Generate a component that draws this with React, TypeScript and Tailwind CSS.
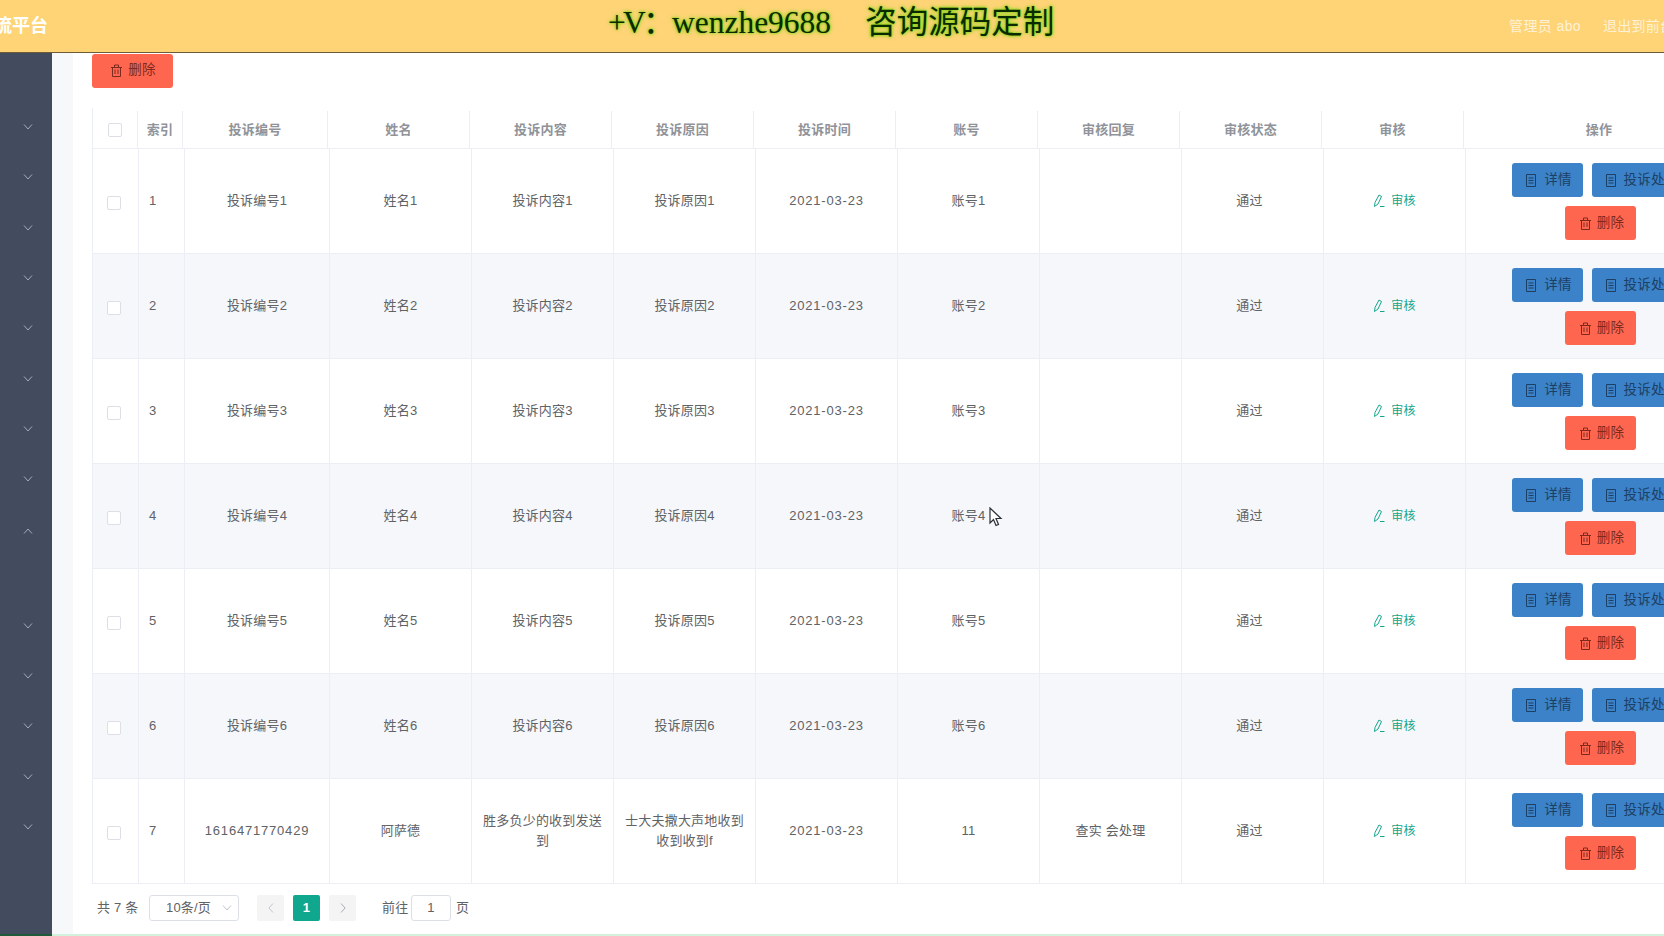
import type { ReactNode } from 'react';

interface Row {
  id: number;
  code: string;
  name: string;
  content: string;
  reason: string;
  account: string;
  reply: string;
}

const rows: Row[] = [1, 2, 3, 4, 5, 6].map((n) => ({
  id: n,
  code: `投诉编号${n}`,
  name: `姓名${n}`,
  content: `投诉内容${n}`,
  reason: `投诉原因${n}`,
  account: `账号${n}`,
  reply: '',
}));

rows.push({
  id: 7,
  code: '1616471770429',
  name: '阿萨德',
  content: '胜多负少的收到发送到',
  reason: '士大夫撒大声地收到收到收到f',
  account: '11',
  reply: '查实 会处理',
});

const headers = ['投诉编号', '姓名', '投诉内容', '投诉原因', '投诉时间', '账号', '审核回复', '审核状态', '审核', '操作'];

// sidebar menu, index 8 is open (empty submenu below it)
const menuCount = 14;
const openIndex = 8;

function TrashIcon() {
  return (
    <svg width="11" height="13" viewBox="0 0 11 13" fill="none" stroke="currentColor" strokeWidth="1" className="shrink-0">
      <path d="M0 3.500h11M3.500 3.500v-2.500h4v2.500M1.500 3.500v9h8v-9M4 5.500v4.500M7 5.500v4.500" />
    </svg>
  );
}

function DocIcon() {
  return (
    <svg width="10" height="13" viewBox="0 0 10 13" fill="none" stroke="currentColor" strokeWidth="1" className="shrink-0">
      <path d="M.5.500h9v12h-9zM2.500 4h5M2.500 6.500h5M2.500 9h5" />
    </svg>
  );
}

function PencilIcon() {
  return (
    <svg width="12" height="13" viewBox="0 0 12 13" fill="none" stroke="currentColor" strokeWidth="1" className="shrink-0 mb-[2px]">
      <path d="M1.500 12.500 2 8.500 6 1l2.500 1.500L5 10zM7 12.500h4.500" />
    </svg>
  );
}

function Chevron({ up, color = '#a3abb9' }: { up?: boolean; color?: string }) {
  return (
    <svg width="10" height="6" viewBox="0 0 10 6" fill="none" stroke={color} strokeWidth="1">
      <path d={up ? 'M1 5.500 5 1l4 4.500' : 'M1 .5 5 5l4-4.500'} />
    </svg>
  );
}

function Check() {
  return <span className="block w-[14px] h-[14px] rounded-[2px] border border-[#dcdfe6] bg-white" />;
}

function ActionButton({ color, icon, children, width }: { color: 'blue' | 'red'; icon: ReactNode; children: ReactNode; width: string }) {
  const palette = color === 'blue' ? 'bg-[#3b82c8] text-[#1d3f63] gap-[8px] pl-[3px]' : 'bg-[#ff6650] text-[#7d2a1e] gap-[6px] pl-[3px]';
  return (
    <button className={`h-[34px] shrink-0 rounded-[3px] flex items-center justify-center pt-px text-[13.500px] whitespace-nowrap ${palette} ${width}`}>
      {icon}
      {children}
    </button>
  );
}

function Cell({ children, className = '' }: { children?: ReactNode; className?: string }) {
  return (
    <div className={`border-r border-[#ebeef5] flex items-center justify-center text-center ${className}`}>
      {children}
    </div>
  );
}

export default function App() {
  return (
    <div className="w-[1664px] h-[936px] overflow-hidden flex flex-col bg-white text-[13px] tracking-[0.2px] text-[#606266] font-['Liberation_Sans','Noto_Sans_CJK_SC',sans-serif]">
      {/* top bar */}
      <header className="h-[53px] shrink-0 bg-[#fed476] border-b border-[#6b5b38] flex items-center overflow-hidden text-white">
        <div className="shrink-0 -ml-[6px] w-[54px] text-[18px] font-bold tracking-normal">流平台</div>
        <div className="shrink-0 ml-[560px] w-[452px] flex whitespace-pre -mt-[7px] text-[31.500px] tracking-normal text-[#0c2a00] font-['Liberation_Serif','Noto_Sans_CJK_SC',serif] [text-shadow:0_0_2px_#6fd400,0_0_4px_#6fd400]">
          <span className="tracking-[-2.700px]">+V：</span>
          <span>wenzhe9688</span>
          <span className="ml-[34px]">咨询源码定制</span>
        </div>
        <div className="shrink-0 ml-[449px] text-[14px] tracking-[0.4px] opacity-70">管理员 abo</div>
        <div className="shrink-0 ml-[22px] text-[14px] opacity-70">退出到前台</div>
      </header>

      <div className="flex-1 flex min-h-0">
        {/* sidebar */}
        <aside className="w-[52px] shrink-0 bg-[#434c5e] pt-[49px] border-b-2 border-[#1f5a3a]">
          {Array.from({ length: menuCount }, (_, i) => (
            <div key={i} className={i === openIndex ? 'mt-px mb-[45px]' : ''}>
              <div className="h-[50.300px] flex items-center justify-center pl-[3px]">
                <Chevron up={i === openIndex} />
              </div>
            </div>
          ))}
        </aside>

        <div className="w-[21px] shrink-0 bg-[#f6f8fa] border-b-2 border-[#d3f2dc]" />

        {/* main */}
        <main className="flex-1 min-w-0 overflow-hidden relative border-b-2 border-[#d3f2dc] pl-[19px] pt-px">
          <button className="h-[34px] w-[81px] rounded-[3px] bg-[#ff6650] text-[#7d2a1e] flex items-center justify-center gap-[6px] pl-[2px] pb-px text-[13.500px]">
            <TrashIcon />
            删除
          </button>

          <div className="mt-[20px] w-[1644px] border-l border-[#ebeef5]">
            <div className="grid grid-cols-[45px_45px_145px_repeat(8,142px)_270px] h-[41px] pt-[3px] border-b border-[#ebeef5] text-[#909399] font-semibold">
              <Cell className="pt-px"><Check /></Cell>
              <Cell>索引</Cell>
              {headers.map((h) => (
                <Cell key={h} className={h === '操作' ? 'border-r-0' : ''}>{h}</Cell>
              ))}
            </div>

            {rows.map((row, i) => (
              <div
                key={row.id}
                className={`grid grid-cols-[46px_46px_145px_repeat(8,142px)_270px] h-[105px] border-b border-[#ebeef5] ${i % 2 === 1 ? 'bg-[#f5f7fa]' : 'bg-white'}`}
              >
                <Cell className="pr-[4px] pt-[3px]"><Check /></Cell>
                <Cell className="justify-start pl-[10px]">{row.id}</Cell>
                <Cell className={row.id === 7 ? 'tracking-[0.800px]' : ''}>{row.code}</Cell>
                <Cell>{row.name}</Cell>
                <Cell className="leading-[20px] px-[10px]">{row.content}</Cell>
                <Cell className="leading-[20px] px-[10px]">{row.reason}</Cell>
                <Cell className="tracking-[0.800px]">2021-03-23</Cell>
                <Cell>{row.account}</Cell>
                <Cell>{row.reply}</Cell>
                <Cell className="pr-[6px]">通过</Cell>
                <Cell className="text-[#13a68d] text-[12px] gap-[6px]">
                  <PencilIcon />
                  审核
                </Cell>
                <div className="flex flex-col justify-center gap-[9px] pl-[46px]">
                  <div className="flex gap-[9px]">
                    <ActionButton color="blue" icon={<DocIcon />} width="w-[71px]">详情</ActionButton>
                    <ActionButton color="blue" icon={<DocIcon />} width="w-[97px]">投诉处理</ActionButton>
                  </div>
                  <div className="pl-[53px]">
                    <ActionButton color="red" icon={<TrashIcon />} width="w-[71px]">删除</ActionButton>
                  </div>
                </div>
              </div>
            ))}
          </div>

          {/* pagination */}
          <div className="mt-[11px] h-[26px] flex items-center">
            <span className="ml-[5px] w-[40px] whitespace-pre">共 7 条</span>
            <div className="ml-[12px] w-[90px] h-[26px] rounded-[3px] border border-[#dcdfe6] flex items-center justify-between pl-[16px] pr-[6px]">
              <span>10条/页</span>
              <Chevron color="#c0c4cc" />
            </div>
            <div className="ml-[18px] w-[27px] h-[26px] rounded-[2px] bg-[#f4f4f5] text-[#c0c4cc] flex items-center justify-center">
              <svg width="6" height="10" viewBox="0 0 6 10" fill="none" stroke="currentColor"><path d="M5 .5.900 5 5 9.500" /></svg>
            </div>
            <div className="ml-[9px] w-[27px] h-[26px] rounded-[2px] bg-[#0fa78e] text-white font-bold flex items-center justify-center">1</div>
            <div className="ml-[9px] w-[27px] h-[26px] rounded-[2px] bg-[#f4f4f5] text-[#a8abb2] flex items-center justify-center">
              <svg width="6" height="10" viewBox="0 0 6 10" fill="none" stroke="currentColor"><path d="m1 .5 4.100 4.500L1 9.500" /></svg>
            </div>
            <span className="ml-[26px] w-[26px] whitespace-nowrap">前往</span>
            <div className="ml-[3px] w-[40px] h-[26px] rounded-[3px] border border-[#dcdfe6] flex items-center justify-center">1</div>
            <span className="ml-[5px]">页</span>
          </div>

          {/* mouse pointer from the recording */}
          <svg width="14" height="20" viewBox="0 0 14 20" className="absolute left-[916px] top-[454px]">
            <path d="M1 1v15l3.500-3.500 2.500 6 2.500-1-2.500-6h5z" fill="#fff" stroke="#2b2f38" strokeWidth="1.200" />
          </svg>
        </main>
      </div>
    </div>
  );
}
